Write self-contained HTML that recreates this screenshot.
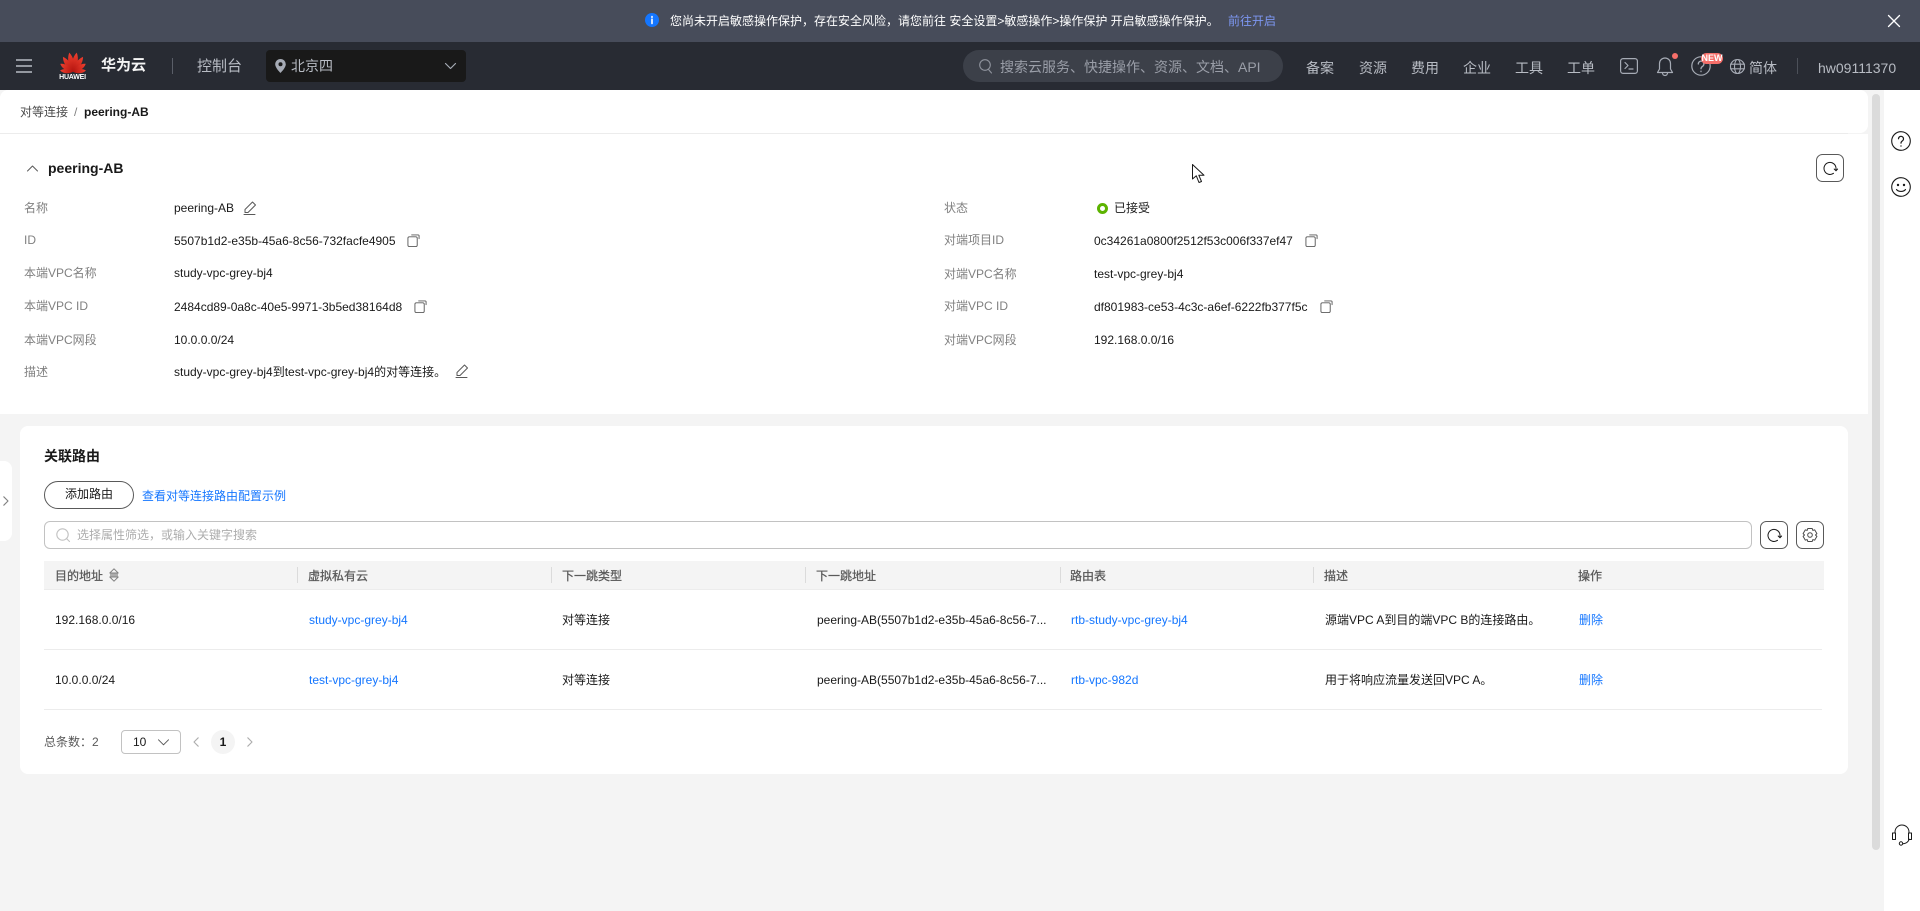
<!DOCTYPE html>
<html lang="zh-CN"><head><meta charset="utf-8"><title>peering-AB</title>
<style>
*{box-sizing:border-box}
html,body{margin:0;padding:0;width:1920px;height:911px;overflow:hidden;background:#f4f4f4;font:12px/16px "Liberation Sans","Noto Sans CJK SC",sans-serif;color:#191919}
.a,.t{position:absolute}
.t{white-space:nowrap}
.l{color:#808080}
.b{color:#1476ff}
.n{color:#b8bcc4;font-size:14px;top:60px}
.h{color:#595959;top:568px;-webkit-text-stroke:.25px #595959}
.d{position:absolute;width:1px;height:16px;top:567px;background:#dbdbdb}
svg{position:absolute;overflow:visible;fill:none;stroke-linecap:round;stroke-linejoin:round}
</style></head><body>
<svg width="0" height="0" style="position:absolute"><defs>
<symbol id="copy" viewBox="0 0 14 14" overflow="visible"><rect x="1" y="3" width="10" height="10.500" rx="1.500"/><path d="M5 1h7a1 1 0 0 1 1 1v3"/></symbol>
<symbol id="pen" viewBox="0 0 14 14" overflow="visible"><path d="M9.500 1l3 3L5 11.500H2V8.500zM1 13.500h11"/></symbol>
<symbol id="rf" viewBox="0 0 14 14" overflow="visible"><path d="M10.500 12.300A6 6 0 1 1 13 7.500v2"/><path d="M11.200 8l1.800 1.800L14.600 8"/></symbol>
<linearGradient id="g" x1="0" y1="0" x2="0" y2="1"><stop offset="0" stop-color="#f0402f"/><stop offset="1" stop-color="#b3140f"/></linearGradient>
<path id="p1" d="M0 0C-3.600-6-3.600-14 0-19.500 3.600-14 3.600-6 0 0z"/>
<path id="p2" d="M0 0C-3.400-5.500-3.400-13 0-18 3.400-13 3.400-5.500 0 0z"/>
<path id="p3" d="M0 0C-3.200-4.500-3.200-11 0-15 3.200-11 3.200-4.500 0 0z"/>
<path id="p4" d="M0 0C-2.800-4-2.800-9.500 0-13 2.800-9.500 2.800-4 0 0z"/>
</defs></svg>

<!-- banner -->
<div class="a" style="left:0;top:0;width:1920px;height:42px;background:#474c5a"></div>
<svg style="left:645px;top:13px" width="14" height="14"><circle cx="7" cy="7" r="7" fill="#1476ff"/><path d="M7 6.200v4.300M7 3.500v.8" stroke="#fff" stroke-width="1.600"/></svg>
<div class="t" style="left:670px;top:13px;color:#fff">您尚未开启敏感操作保护，存在安全风险，请您前往 安全设置&gt;敏感操作&gt;操作保护 开启敏感操作保护。</div>
<div class="t" style="left:1228px;top:13px;color:#7d97f2">前往开启</div>
<svg style="left:1888px;top:15px" width="12" height="12"><path d="M.5.500l11 11M11.500.500l-11 11" stroke="#fff" stroke-width="1.300"/></svg>

<!-- nav -->
<div class="a" style="left:0;top:42px;width:1920px;height:48px;background:#282b33"></div>
<svg style="left:16px;top:59px" width="16" height="14"><path d="M0 1h16M0 7h16M0 13h16" stroke="#b8bcc4" stroke-width="1.500" stroke-linecap="butt"/></svg>
<svg style="left:60px;top:52px" width="26" height="20" viewBox="0 0 26 20">
<g fill="url(#g)" stroke="none" transform="translate(13 19.800)">
<use href="#p1" transform="rotate(-11)"/><use href="#p1" transform="rotate(11)"/>
<use href="#p2" transform="rotate(-34)"/><use href="#p2" transform="rotate(34)"/>
<use href="#p3" transform="rotate(-58)"/><use href="#p3" transform="rotate(58)"/>
<use href="#p4" transform="rotate(-84)"/><use href="#p4" transform="rotate(84)"/>
</g></svg>
<div class="t" style="left:59px;top:73px;font-size:7px;line-height:9px;color:#fff;font-weight:bold;width:27px;text-align:center;letter-spacing:-.2px">HUAWEI</div>
<div class="t" style="left:101px;top:58px;font-size:15px;color:#f5f5f5;font-weight:bold">华为云</div>
<div class="a" style="left:172px;top:58px;width:1px;height:16px;background:#5a5e68"></div>
<div class="t" style="left:197px;top:59px;font-size:15px;color:#b8bcc4">控制台</div>
<div class="a" style="left:266px;top:50px;width:200px;height:32px;background:#191919;border-radius:4px"></div>
<svg style="left:275px;top:59px" width="11" height="14"><path d="M5.500 0A5.300 5.300 0 0 0 .2 5.300C.2 9 5.500 14 5.500 14s5.300-5 5.300-8.700A5.300 5.300 0 0 0 5.500 0z" fill="#a6abb5"/><circle cx="5.500" cy="5.200" r="2" fill="#191919"/></svg>
<div class="t" style="left:291px;top:58px;font-size:14px;color:#b8bcc4">北京四</div>
<svg style="left:445px;top:63px" width="11" height="7"><path d="M.5.500l5 5 5-5" stroke="#a6abb5" stroke-width="1.200"/></svg>
<div class="a" style="left:963px;top:50px;width:320px;height:32px;background:#3c4049;border-radius:16px"></div>
<svg style="left:979px;top:59px" width="13" height="15"><circle cx="6" cy="6" r="5.300" stroke="#8f939d" stroke-width="1.100"/><path d="M9.500 10.500l3 3.500" stroke="#8f939d" stroke-width="1.100"/></svg>
<div class="t" style="left:1000px;top:59px;font-size:14px;color:#9a9ea8">搜索云服务、快捷操作、资源、文档、API</div>
<div class="t n" style="left:1306px">备案</div>
<div class="t n" style="left:1359px">资源</div>
<div class="t n" style="left:1411px">费用</div>
<div class="t n" style="left:1463px">企业</div>
<div class="t n" style="left:1515px">工具</div>
<div class="t n" style="left:1567px">工单</div>
<svg style="left:1620px;top:58px" width="18" height="16"><rect x=".6" y=".6" width="16.800" height="14.800" rx="2.500" stroke="#a6abb5" stroke-width="1.200"/><path d="M5 4.500L8 7.500 5 10.500M9 11h4" stroke="#a6abb5" stroke-width="1.200"/></svg>
<svg style="left:1656px;top:56px" width="18" height="21"><path d="M9 2a5.500 5.500 0 0 0-5.500 5.500V13L1.500 16.500h15L14.500 13V7.500A5.500 5.500 0 0 0 9 2zM6.500 17a2.500 2.500 0 0 0 5 0" stroke="#a6abb5" stroke-width="1.200"/></svg>
<div class="a" style="left:1672px;top:53px;width:6px;height:6px;border-radius:50%;background:#f66f6a"></div>
<svg style="left:1691px;top:56px" width="20" height="20"><circle cx="10" cy="10" r="9.200" stroke="#a6abb5" stroke-width="1.200"/><path d="M7.300 8a2.800 2.800 0 1 1 4.300 2.300c-1 .7-1.600 1.200-1.600 2.400M10 15.200v.4" stroke="#a6abb5" stroke-width="1.300"/></svg>
<div class="t" style="left:1701px;top:53px;width:22px;height:11px;border-radius:6px;background:#f66f6a;color:#fff;font-size:9px;line-height:11px;font-weight:bold;text-align:center">NEW</div>
<svg style="left:1730px;top:59px" width="15" height="15"><circle cx="7.500" cy="7.500" r="7" stroke="#a6abb5" stroke-width="1.100"/><ellipse cx="7.500" cy="7.500" rx="3" ry="7" stroke="#a6abb5" stroke-width="1.100"/><path d="M.5 5.200h14M.5 9.800h14" stroke="#a6abb5" stroke-width="1.100"/></svg>
<div class="t n" style="left:1749px">简体</div>
<div class="a" style="left:1797px;top:58px;width:1px;height:16px;background:#4c5059"></div>
<div class="t n" style="left:1818px">hw09111370</div>

<!-- right bar -->
<div class="a" style="left:1884px;top:90px;width:36px;height:821px;background:#fff"></div>
<div class="a" style="left:1872px;top:94px;width:8px;height:756px;background:#dbdbdb;border-radius:4px"></div>
<svg style="left:1891px;top:131px" width="20" height="20"><circle cx="10" cy="10" r="9.300" stroke="#191919" stroke-width="1.100"/><path d="M7.500 7.800a2.500 2.500 0 1 1 3.900 2.100c-.9.600-1.400 1.100-1.400 2.200M10 14.800v.3" stroke="#191919" stroke-width="1.200"/></svg>
<svg style="left:1891px;top:177px" width="20" height="20"><circle cx="10" cy="10" r="9.300" stroke="#191919" stroke-width="1.100"/><circle cx="7" cy="8" r="1.200" fill="#191919"/><circle cx="13" cy="8" r="1.200" fill="#191919"/><path d="M5.500 12.500c2 2.600 7 2.600 9 0" stroke="#191919" stroke-width="1.100"/></svg>
<svg style="left:1891px;top:825px" width="22" height="21"><path d="M4 8V7a7 7 0 0 1 14 0v1M18 14c0 2.500-3 4.500-6 4.800" stroke="#191919" stroke-width="1"/><rect x="1.500" y="8" width="3" height="6.500" stroke="#191919" stroke-width="1"/><rect x="17.500" y="8" width="3" height="6.500" stroke="#191919" stroke-width="1"/><circle cx="10" cy="18.500" r="1.700" stroke="#191919" stroke-width="1"/></svg>

<!-- breadcrumb + detail -->
<div class="a" style="left:0;top:90px;width:1868px;height:43px;background:#fff;border-radius:8px 8px 8px 0"></div>
<div class="a" style="left:0;top:133px;width:1848px;height:1px;background:#ececec"></div>
<div class="a" style="left:0;top:134px;width:1868px;height:280px;background:#fff"></div>
<div class="t" style="left:20px;top:104px;color:#4a4a4a">对等连接</div>
<div class="t" style="left:74px;top:104px;color:#808080">/</div>
<div class="t" style="left:84px;top:104px;font-weight:bold;color:#191919">peering-AB</div>

<svg style="left:27px;top:165px" width="11" height="7"><path d="M.5 6L5.500 1l5 5" stroke="#595959" stroke-width="1"/></svg>
<div class="t" style="left:48px;top:160px;font-size:14px;font-weight:bold">peering-AB</div>
<svg style="left:1816px;top:154px" width="28" height="28"><rect x=".5" y=".5" width="27" height="27" rx="6" stroke="#595959"/><use href="#rf" x="7" y="7" width="14" height="14" stroke="#191919" stroke-width="1"/></svg>

<div class="t l" style="left:24px;top:200px">名称</div><div class="t" style="left:174px;top:200px">peering-AB</div>
<svg style="left:243px;top:201px" width="14" height="14" stroke="#595959" stroke-width="1"><use href="#pen" width="14" height="14"/></svg>
<div class="t l" style="left:24px;top:232px">ID</div><div class="t" style="left:174px;top:233px">5507b1d2-e35b-45a6-8c56-732facfe4905</div>
<svg style="left:407px;top:234px" width="13" height="13" stroke="#595959" stroke-width="1"><use href="#copy" width="13" height="13"/></svg>
<div class="t l" style="left:24px;top:265px">本端VPC名称</div><div class="t" style="left:174px;top:265px">study-vpc-grey-bj4</div>
<div class="t l" style="left:24px;top:298px">本端VPC ID</div><div class="t" style="left:174px;top:299px">2484cd89-0a8c-40e5-9971-3b5ed38164d8</div>
<svg style="left:414px;top:300px" width="13" height="13" stroke="#595959" stroke-width="1"><use href="#copy" width="13" height="13"/></svg>
<div class="t l" style="left:24px;top:332px">本端VPC网段</div><div class="t" style="left:174px;top:332px">10.0.0.0/24</div>
<div class="t l" style="left:24px;top:364px">描述</div><div class="t" style="left:174px;top:364px">study-vpc-grey-bj4到test-vpc-grey-bj4的对等连接。</div>
<svg style="left:455px;top:364px" width="14" height="14" stroke="#595959" stroke-width="1"><use href="#pen" width="14" height="14"/></svg>

<div class="t l" style="left:944px;top:200px">状态</div>
<div class="a" style="left:1097px;top:203px;width:11px;height:11px;border:3px solid #5cb300;border-radius:50%"></div>
<div class="t" style="left:1114px;top:200px">已接受</div>
<div class="t l" style="left:944px;top:232px">对端项目ID</div><div class="t" style="left:1094px;top:233px">0c34261a0800f2512f53c006f337ef47</div>
<svg style="left:1305px;top:234px" width="13" height="13" stroke="#595959" stroke-width="1"><use href="#copy" width="13" height="13"/></svg>
<div class="t l" style="left:944px;top:266px">对端VPC名称</div><div class="t" style="left:1094px;top:266px">test-vpc-grey-bj4</div>
<div class="t l" style="left:944px;top:298px">对端VPC ID</div><div class="t" style="left:1094px;top:299px">df801983-ce53-4c3c-a6ef-6222fb377f5c</div>
<svg style="left:1320px;top:300px" width="13" height="13" stroke="#595959" stroke-width="1"><use href="#copy" width="13" height="13"/></svg>
<div class="t l" style="left:944px;top:332px">对端VPC网段</div><div class="t" style="left:1094px;top:332px">192.168.0.0/16</div>

<!-- cursor -->
<svg style="left:1192px;top:164px" width="13" height="20"><path d="M.5.500V15l3.800-3.200L7 18.500l2.500-1-2.700-6.300H12z" fill="#fff" stroke="#191919" stroke-width="1"/></svg>

<!-- left collapse -->
<div class="a" style="left:0;top:461px;width:12px;height:80px;background:#fff;border-radius:0 8px 8px 0"></div>
<svg style="left:3px;top:496px" width="6" height="10"><path d="M.8.800L5 5 .8 9.200" stroke="#808080" stroke-width="1.100"/></svg>

<!-- card -->
<div class="a" style="left:20px;top:426px;width:1828px;height:348px;background:#fff;border-radius:8px"></div>
<div class="t" style="left:44px;top:448px;font-size:14px;font-weight:bold">关联路由</div>
<div class="a" style="left:44px;top:481px;width:90px;height:28px;border:1px solid #595959;border-radius:14px;text-align:center;line-height:25px;color:#191919">添加路由</div>
<div class="t b" style="left:142px;top:488px">查看对等连接路由配置示例</div>
<div class="a" style="left:44px;top:521px;width:1708px;height:28px;border:1px solid #c2c2c2;border-radius:6px"></div>
<svg style="left:56px;top:528px" width="14" height="14"><circle cx="6.500" cy="6.500" r="5.700" stroke="#c2c2c2" stroke-width="1.100"/><path d="M10.500 10.500l3 3" stroke="#c2c2c2" stroke-width="1.100"/></svg>
<div class="t" style="left:77px;top:527px;color:#adadad">选择属性筛选，或输入关键字搜索</div>
<svg style="left:1760px;top:521px" width="28" height="28"><rect x=".5" y=".5" width="27" height="27" rx="6" stroke="#595959"/><use href="#rf" x="7" y="7" width="14" height="14" stroke="#191919" stroke-width="1"/></svg>
<svg style="left:1796px;top:521px" width="28" height="28"><rect x=".5" y=".5" width="27" height="27" rx="6" stroke="#595959"/><path d="M11.800 7.500h4.400l.6 1.900 1.900-.5 2.200 3.700L19.500 14l1.400 1.400-2.200 3.700-1.900-.5-.6 1.900h-4.400l-.6-1.900-1.900.5-2.200-3.700L8.500 14l-1.400-1.400 2.200-3.700 1.900.5z" stroke="#4a4a4a" stroke-width="1"/><circle cx="14" cy="14" r="2.300" stroke="#4a4a4a" stroke-width="1"/></svg>

<div class="a" style="left:44px;top:561px;width:1780px;height:29px;background:#f4f4f4;border-bottom:1px solid #ececec"></div>
<div class="t h" style="left:55px">目的地址</div>
<svg style="left:109px;top:568px" width="10" height="14"><path d="M5 .8L9.200 5H.8zM5 13.200L.8 9h8.400z" stroke="#808080" stroke-width="1"/><path d="M1 7h8" stroke="#adadad" stroke-width="3" stroke-linecap="butt"/></svg>
<div class="d" style="left:297px"></div><div class="t h" style="left:308px">虚拟私有云</div>
<div class="d" style="left:551px"></div><div class="t h" style="left:562px">下一跳类型</div>
<div class="d" style="left:805px"></div><div class="t h" style="left:816px">下一跳地址</div>
<div class="d" style="left:1060px"></div><div class="t h" style="left:1070px">路由表</div>
<div class="d" style="left:1313px"></div><div class="t h" style="left:1324px">描述</div>
<div class="t h" style="left:1578px">操作</div>

<div class="t" style="left:55px;top:612px">192.168.0.0/16</div>
<div class="t b" style="left:309px;top:612px">study-vpc-grey-bj4</div>
<div class="t" style="left:562px;top:612px">对等连接</div>
<div class="t" style="left:817px;top:612px">peering-AB(5507b1d2-e35b-45a6-8c56-7...</div>
<div class="t b" style="left:1071px;top:612px">rtb-study-vpc-grey-bj4</div>
<div class="t" style="left:1325px;top:612px">源端VPC A到目的端VPC B的连接路由。</div>
<div class="t b" style="left:1579px;top:612px">删除</div>
<div class="a" style="left:44px;top:649px;width:1778px;height:1px;background:#ececec"></div>

<div class="t" style="left:55px;top:672px">10.0.0.0/24</div>
<div class="t b" style="left:309px;top:672px">test-vpc-grey-bj4</div>
<div class="t" style="left:562px;top:672px">对等连接</div>
<div class="t" style="left:817px;top:672px">peering-AB(5507b1d2-e35b-45a6-8c56-7...</div>
<div class="t b" style="left:1071px;top:672px">rtb-vpc-982d</div>
<div class="t" style="left:1325px;top:672px">用于将响应流量发送回VPC A。</div>
<div class="t b" style="left:1579px;top:672px">删除</div>
<div class="a" style="left:44px;top:709px;width:1778px;height:1px;background:#ececec"></div>

<div class="t" style="left:44px;top:734px;color:#595959">总条数：2</div>
<div class="a" style="left:121px;top:730px;width:60px;height:24px;border:1px solid #c2c2c2;border-radius:4px"></div>
<div class="t" style="left:133px;top:734px">10</div>
<svg style="left:158px;top:739px" width="11" height="7"><path d="M.5.800l5 5 5-5" stroke="#595959" stroke-width="1"/></svg>
<svg style="left:193px;top:737px" width="6" height="10"><path d="M5.200.8L1 5l4.200 4.200" stroke="#adadad" stroke-width="1.100"/></svg>
<div class="a" style="left:211px;top:730px;width:24px;height:24px;border-radius:50%;background:#f4f4f4;text-align:center;line-height:24px;font-weight:bold">1</div>
<svg style="left:247px;top:737px" width="6" height="10"><path d="M.8.800L5 5 .8 9.200" stroke="#adadad" stroke-width="1.100"/></svg>
</body></html>
